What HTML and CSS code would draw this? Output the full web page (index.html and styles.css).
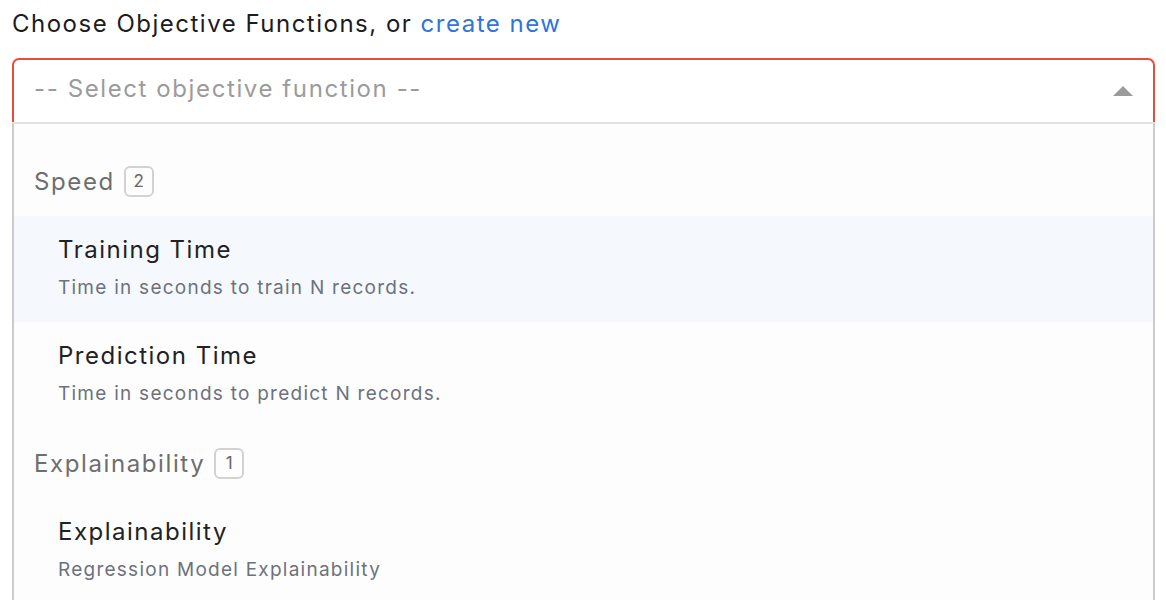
FILE: index.html
```html
<!DOCTYPE html>
<html lang="en">
<head>
<meta charset="utf-8">
<title>Choose Objective Functions</title>
<link rel="stylesheet" href="styles.css">
</head>
<body>
<div class="field">
  <label class="field-label">Choose Objective Functions, or <a class="link" href="#">create new</a></label>
  <div class="select">
    <span class="placeholder">-- Select objective function --</span>
    <svg class="caret" width="20" height="10" viewBox="0 0 20 10"><polygon points="0,10 10,0 20,10" fill="#9b9b9b"/></svg>
  </div>
  <div class="menu">
    <div class="group">Speed <span class="badge">2</span></div>
    <div class="option active">
      <div class="option-title">Training Time</div>
      <div class="option-desc">Time in seconds to train N records.</div>
    </div>
    <div class="option">
      <div class="option-title">Prediction Time</div>
      <div class="option-desc">Time in seconds to predict N records.</div>
    </div>
    <div class="group">Explainability <span class="badge">1</span></div>
    <div class="option">
      <div class="option-title">Explainability</div>
      <div class="option-desc">Regression Model Explainability</div>
    </div>
  </div>
</div>
</body>
</html>
```

FILE: styles.css
```css
html, body {
  margin: 0;
  padding: 0;
  background: #ffffff;
}
body {
  font-family: Inter, "Open Sans", sans-serif;
  color: #1f1f1f;
}
.field {
  width: 1143px;
  margin-left: 12px;
  padding-top: 8px;
}
.field-label {
  display: block;
  font-size: 24px;
  letter-spacing: 1.5px;
  line-height: 32px;
  color: #1c1c1c;
  margin-bottom: 18px;
}
.link {
  color: #2f74d8;
  text-decoration: none;
}
.select {
  height: 64px;
  box-sizing: border-box;
  border: 2px solid #e94b3c;
  border-bottom: none;
  border-radius: 7px 7px 0 0;
  display: flex;
  align-items: center;
  justify-content: space-between;
  padding: 0 20px 6px 20px;
}
.placeholder {
  font-size: 24px;
  letter-spacing: 1.6px;
  color: #9b9b9b;
}
.caret {
  display: block;
  margin-top: 6px;
}
.menu {
  height: 476px;
  overflow: hidden;
  padding-top: 22px;
  border: 2px solid #cccccc;
  border-top: 2px solid #e3e3e3;
  border-bottom: none;
  background: #fdfdfd;
}
.group {
  height: 70px;
  display: flex;
  align-items: center;
  gap: 9px;
  padding-left: 20px;
  font-size: 24px;
  letter-spacing: 1.6px;
  color: #6e6e6e;
}
.badge {
  width: 26px;
  height: 27px;
  border: 2px solid #d2d2d2;
  border-radius: 6px;
  display: inline-flex;
  align-items: center;
  justify-content: center;
  font-size: 17px;
  letter-spacing: 0;
  color: #666666;
}
.option {
  height: 106px;
  box-sizing: border-box;
  padding: 18px 44px 0 44px;
}
.option.active {
  background: #f5f8fc;
}
.option-title {
  font-size: 24px;
  letter-spacing: 1.5px;
  line-height: 32px;
  color: #222222;
}
.option-desc {
  font-size: 19px;
  letter-spacing: 1.25px;
  line-height: 28px;
  margin-top: 8px;
  color: #6c727c;
}
```
